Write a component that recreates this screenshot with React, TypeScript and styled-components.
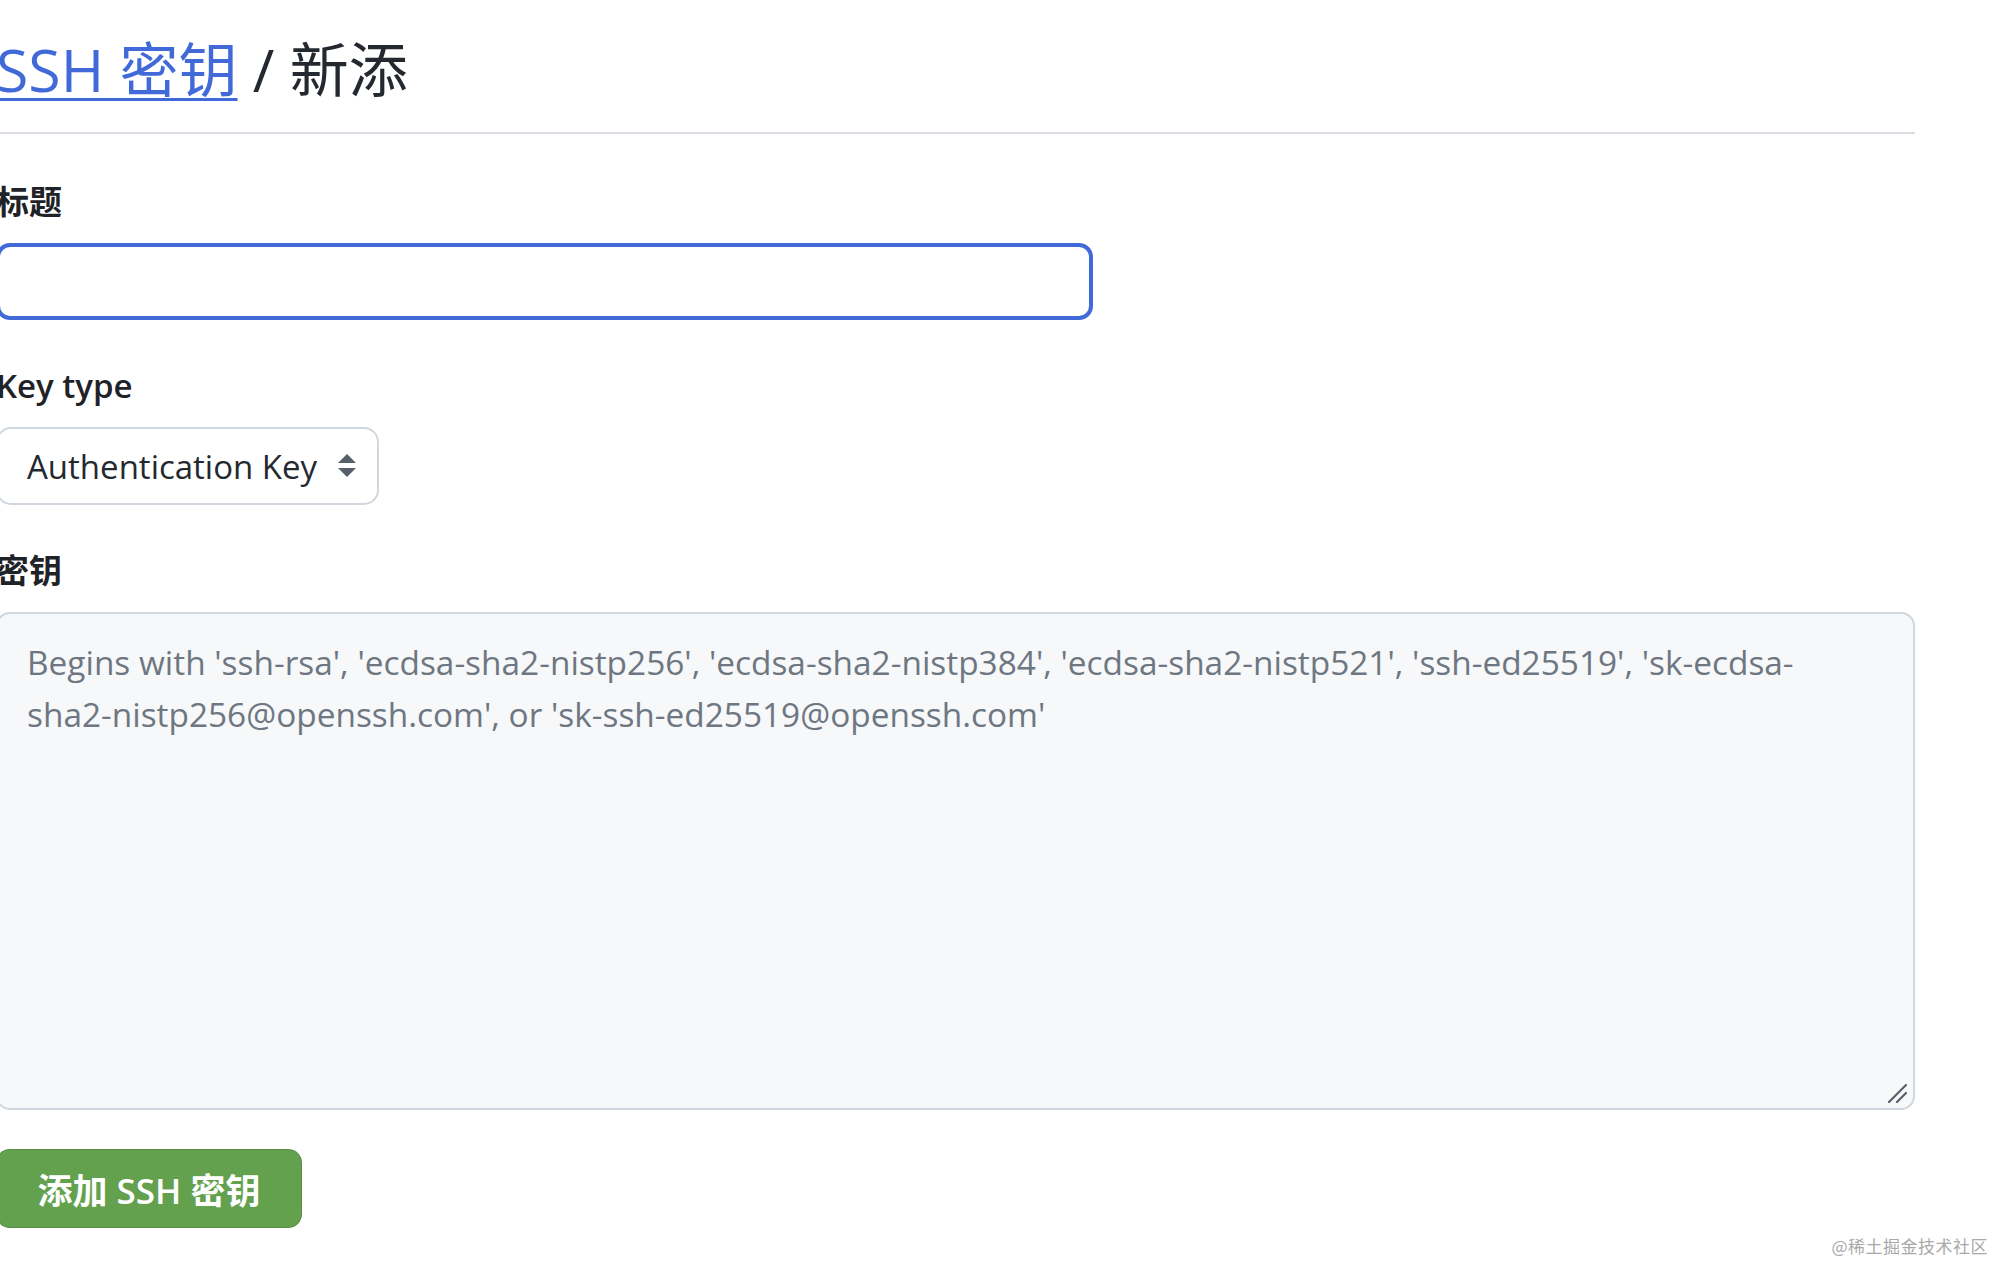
import React from "react";
import styled, { createGlobalStyle } from "styled-components";

const GlobalStyle = createGlobalStyle`
  html, body {
    margin: 0;
    padding: 0;
    background: #ffffff;
    overflow: hidden;
  }
  body {
    font-family: "Open Sans", "Noto Sans CJK SC", sans-serif;
    color: #24292f;
  }
  * { box-sizing: border-box; }
`;

const Page = styled.div`
  position: relative;
  width: 1995px;
  height: 1262px;
  overflow: hidden;
`;

const Container = styled.div`
  margin-left: -4px;
  width: 1919px;
  display: flex;
  flex-direction: column;
`;

const Subhead = styled.div`
  padding-top: 32px;
  padding-bottom: 25px;
  border-bottom: 2px solid #d8dee4;
`;

const Heading = styled.h2`
  margin: 0;
  font-size: 59px;
  line-height: 75px;
  font-weight: 400;
  color: #24292f;
  font-family: "Open Sans", "Noto Sans CJK SC", sans-serif;
`;

const HeadLink = styled.a`
  color: #4169d8;
  text-decoration: underline;
  text-decoration-thickness: 3px;
  text-underline-offset: 6px;
  cursor: pointer;
`;

const Form = styled.form`
  display: flex;
  flex-direction: column;
  padding-top: 46px;
`;

const Group = styled.div<{ $gap?: number }>`
  display: flex;
  flex-direction: column;
  align-items: flex-start;
  gap: 19px;
  margin-bottom: ${(p) => p.$gap ?? 44}px;
`;

const Label = styled.label`
  font-size: 33px;
  line-height: 44px;
  font-weight: 600;
  color: #1f2328;
`;

const TextInput = styled.input`
  width: 1097px;
  height: 77px;
  border: 4px solid #4169d8;
  border-radius: 14px;
  background: #ffffff;
  font-size: 35px;
  padding: 0 28px;
  outline: none;
  font-family: inherit;
`;

const SelectBox = styled.div`
  width: 383px;
  height: 78px;
  border: 2px solid #d0d7de;
  border-radius: 15px;
  background: #ffffff;
  display: flex;
  align-items: center;
  justify-content: space-between;
  padding: 0 21px 0 29px;
  font-size: 33px;
  color: #24292f;
  cursor: pointer;
`;

const SelectText = styled.span`
  white-space: nowrap;
`;

const Arrows = styled.svg`
  width: 18px;
  height: 24px;
  flex: none;
`;

const AreaWrap = styled.div`
  position: relative;
  width: 1919px;
  height: 498px;
`;

const KeyArea = styled.textarea`
  display: block;
  width: 100%;
  height: 100%;
  border: 2px solid #d0d7de;
  border-radius: 14px;
  background: #f6f8fa;
  font-family: "Open Sans", "Noto Sans CJK SC", sans-serif;
  font-size: 33.4px;
  line-height: 52px;
  padding: 22px 29px;
  color: #24292f;
  resize: none;
  outline: none;
  &::placeholder {
    color: #6e7781;
  }
`;

const ResizeGrip = styled.svg`
  position: absolute;
  right: 8px;
  bottom: 7px;
  width: 20px;
  height: 20px;
  pointer-events: none;
`;

const SubmitButton = styled.button`
  align-self: flex-start;
  margin-top: -5px;
  height: 79px;
  width: 306px;
  padding: 0;
  border: 1px solid rgba(27, 31, 36, 0.15);
  border-radius: 14px;
  background: #63a14f;
  color: #ffffff;
  font-family: "Open Sans", "Noto Sans CJK SC", sans-serif;
  font-size: 35px;
  font-weight: 600;
  cursor: pointer;
`;

const Watermark = styled.div`
  position: absolute;
  right: 7px;
  bottom: 4px;
  font-family: "Noto Sans CJK SC", sans-serif;
  font-size: 17px;
  color: #a9a9a9;
  letter-spacing: 0.5px;
`;

export default function App() {
  return (
    <Page>
      <GlobalStyle />
      <Container>
        <Subhead>
          <Heading>
            <HeadLink>SSH 密钥</HeadLink> / 新添
          </Heading>
        </Subhead>
        <Form onSubmit={(e) => e.preventDefault()}>
          <Group>
            <Label htmlFor="title">标题</Label>
            <TextInput id="title" type="text" />
          </Group>
          <Group>
            <Label>Key type</Label>
            <SelectBox>
              <SelectText>Authentication Key</SelectText>
              <Arrows viewBox="0 0 18 24">
                <path d="M9 0 L18 9 L0 9 Z" fill="#57606a" />
                <path d="M0 14 L18 14 L9 23 Z" fill="#57606a" />
              </Arrows>
            </SelectBox>
          </Group>
          <Group $gap={44}>
            <Label htmlFor="key">密钥</Label>
            <AreaWrap>
              <KeyArea
                id="key"
                placeholder={
                  "Begins with 'ssh-rsa', 'ecdsa-sha2-nistp256', 'ecdsa-sha2-nistp384', 'ecdsa-sha2-nistp521', 'ssh-ed25519', 'sk-ecdsa-\nsha2-nistp256@openssh.com', or 'sk-ssh-ed25519@openssh.com'"
                }
              />
              <ResizeGrip viewBox="0 0 20 20">
                <line x1="2" y1="19" x2="19" y2="2" stroke="#57606a" strokeWidth="2.2" strokeLinecap="round" />
                <line x1="10" y1="19" x2="19" y2="10" stroke="#57606a" strokeWidth="2.2" strokeLinecap="round" />
              </ResizeGrip>
            </AreaWrap>
          </Group>
          <SubmitButton type="submit">添加 SSH 密钥</SubmitButton>
        </Form>
      </Container>
      <Watermark>@稀土掘金技术社区</Watermark>
    </Page>
  );
}
